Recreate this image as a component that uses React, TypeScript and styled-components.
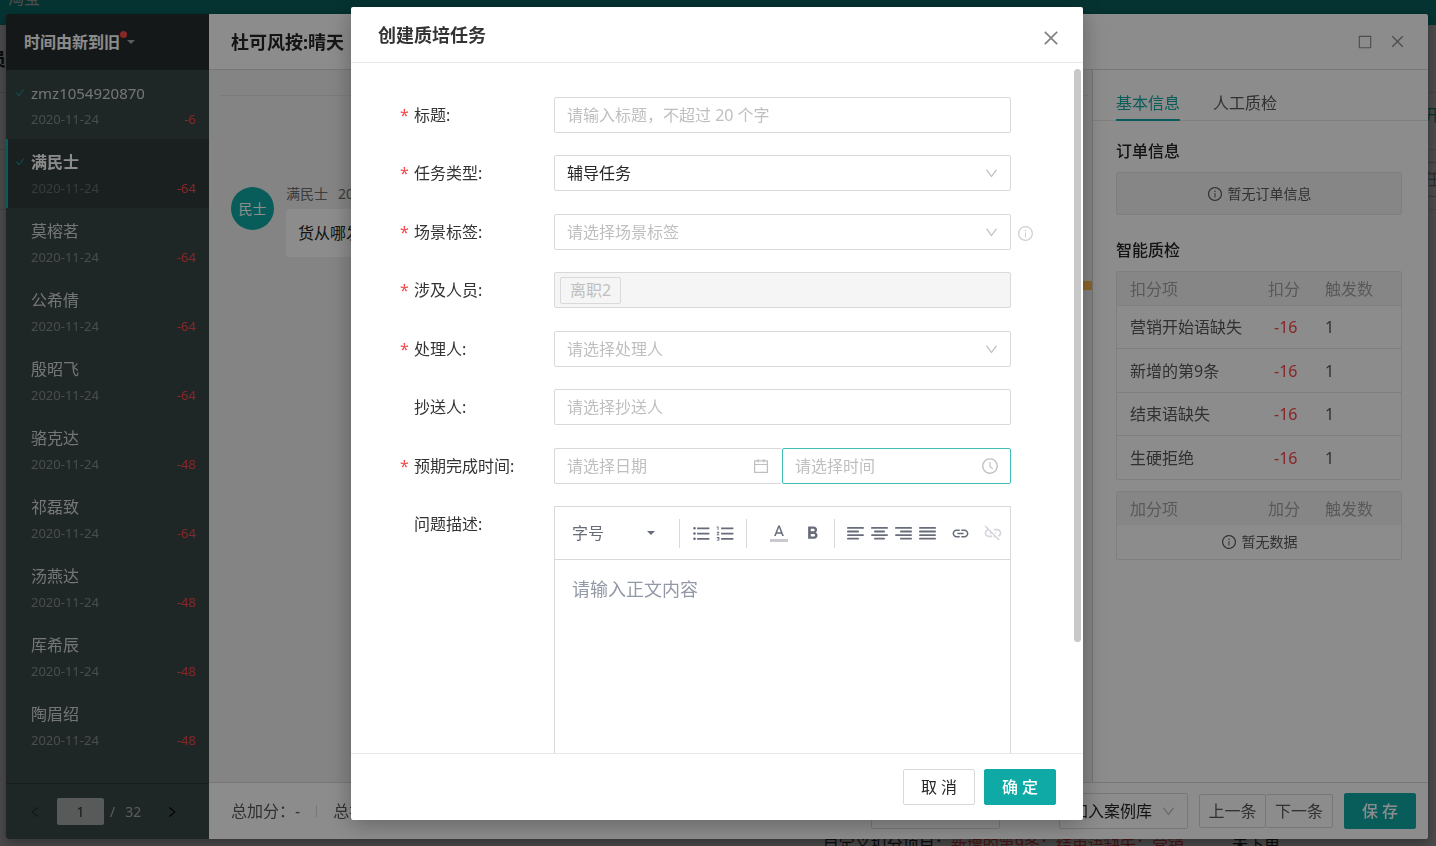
import React from "react";
import styled, { createGlobalStyle, css } from "styled-components";
import {
  AiOutlineBorder,
  AiOutlineCalendar,
  AiOutlineCheck,
  AiOutlineClockCircle,
  AiOutlineClose,
  AiOutlineDown,
  AiOutlineInfoCircle,
  AiOutlineLeft,
  AiOutlineRight,
} from "react-icons/ai";
import {
  MdFormatBold,
  MdFormatListBulleted,
  MdFormatListNumbered,
  MdLink,
  MdLinkOff,
} from "react-icons/md";

const color = {
  primary: "#0fa9a6",
  danger: "#f5474b",
  text: "#262626",
  body: "#595959",
  hint: "#bfbfbf",
  border: "#d9d9d9",
  line: "#e8e8e8",
  tool: "#676c7b",
};

const GlobalStyle = createGlobalStyle`
  *, *::before, *::after { box-sizing: border-box; }
  body {
    margin: 0;
    overflow: hidden;
    color: ${color.text};
    font: 16px/24px "Noto Sans", "Noto Sans CJK SC", sans-serif;
  }
  button, input, select, textarea { font: inherit; color: inherit; }
  h1, h2, h3, p, ul { margin: 0; padding: 0; font-weight: 400; }
  button { cursor: pointer; }
  svg { display: block; }
`;

/* ---------- page under the overlays ---------- */

const Page = styled.div`
  height: 100vh;
  display: flex;
  flex-direction: column;
  overflow: hidden;
  background: #f5f5f5;
`;

const TopBar = styled.header`
  flex: none;
  display: flex;
  align-items: flex-end;
  height: 25px;
  padding: 0 8px 15px;
  overflow: hidden;
  background: ${color.primary};
  color: #fff;
`;

const PageHead = styled.div`
  flex: none;
  display: flex;
  align-items: center;
  height: 68px;
  border-bottom: 1px solid ${color.border};
`;

const PageTitle = styled.h1`
  width: 6px;
  overflow: hidden;
  direction: rtl;
  white-space: nowrap;
  font-size: 18px;
  font-weight: 700;
`;

const PageBar = styled.div`
  flex: none;
  display: flex;
  align-items: flex-start;
  justify-content: flex-end;
  height: 57px;
  padding-top: 10px;
  border-bottom: 1px solid ${color.border};
  color: ${color.primary};
`;

const PageLink = styled.a`
  width: 12px;
  overflow: hidden;
  white-space: nowrap;
  color: inherit;
  text-decoration: none;
`;

const PageFilter = styled.div`
  flex: none;
  display: flex;
  justify-content: flex-end;
  padding: 12px 0;
  border-bottom: 1px solid ${color.border};
`;

const PageFilterBox = styled.div`
  width: 12px;
  height: 35px;
  padding: 4px 0;
  overflow: hidden;
  border: solid #bfbfbf;
  border-width: 1px 0;
  color: #8c8c8c;
`;

const PageRows = styled.div`
  flex: 1;
  display: flex;
  align-items: flex-end;
  justify-content: flex-end;
  gap: 48px;
  padding-right: 156px;
  height: 0;
  margin-bottom: -10px;
  white-space: nowrap;
  em { color: ${color.danger}; font-style: normal; }
`;

const Mask = styled.div<{ $pad: string }>`
  position: fixed;
  inset: 0;
  display: flex;
  justify-content: center;
  padding: ${(p) => p.$pad};
  background: rgba(0, 0, 0, 0.45);
`;

/* ---------- review window ---------- */

const Review = styled.section`
  flex: 1;
  display: flex;
  min-width: 0;
  overflow: hidden;
  border-radius: 2px;
  background: #fff;
  box-shadow: 0 4px 12px rgba(0, 0, 0, 0.3);
`;

const Side = styled.aside`
  flex: none;
  display: flex;
  flex-direction: column;
  width: 203px;
  background: #3a4646;
  color: #fff;
`;

const SortButton = styled.button`
  flex: none;
  display: flex;
  align-items: center;
  height: 56px;
  padding: 0 18px;
  border: 0;
  background: #262d2f;
  color: #fff;
  font-weight: 700;
`;

const Dot = styled.i`
  align-self: flex-start;
  width: 7px;
  height: 7px;
  margin-top: 17px;
  border-radius: 50%;
  background: ${color.danger};
`;

const Caret = styled.i<{ $tone: string }>`
  border: solid transparent;
  border-width: 4px 4px 0;
  border-top-color: ${(p) => p.$tone};
`;

const Buyers = styled.ul`
  flex: 1;
  min-height: 0;
  overflow: hidden;
  list-style: none;
`;

const Buyer = styled.li<{ $active?: boolean }>`
  display: grid;
  grid-template-columns: 16px 1fr auto;
  align-content: center;
  align-items: center;
  row-gap: 2px;
  height: 69px;
  padding: 2px 13px 0 9px;
  ${(p) =>
    p.$active &&
    css`
      padding-left: 7px;
      border-left: 2px solid ${color.primary};
      background: #313a3b;
    `}
`;

const Tick = styled.span`
  color: ${color.primary};
`;

const BuyerName = styled.span<{ $active?: boolean; $latin?: boolean }>`
  grid-column: 2 / 4;
  font-size: ${(p) => (p.$latin ? 15 : 16)}px;
  font-weight: ${(p) => (p.$active ? 700 : 400)};
  color: ${(p) => (p.$active ? "#fff" : "#d4d6d6")};
`;

const BuyerDate = styled.time<{ $active?: boolean }>`
  grid-column: 2;
  font-size: 13px;
  color: ${(p) => (p.$active ? "#656b6b" : "#858b8b")};
`;

const Loss = styled.span`
  font-size: 13px;
  color: ${color.danger};
`;

const Pager = styled.nav`
  flex: none;
  display: flex;
  align-items: center;
  height: 56px;
  padding: 0 30px 0 22px;
  border-top: 1px solid #2d3637;
  font-size: 14px;
  color: #a5a9a9;
`;

const PageInput = styled.input`
  width: 47px;
  height: 27px;
  margin: 0 6px 0 15px;
  border: 0;
  border-radius: 2px;
  background: #a1a5a5;
  color: ${color.text};
  text-align: center;
`;

const PageTotal = styled.span`
  flex: 1;
  padding-left: 10px;
`;

const IconButton = styled.button<{ $tone: string }>`
  display: flex;
  padding: 0;
  border: 0;
  background: none;
  color: ${(p) => p.$tone};
`;

const Work = styled.div`
  flex: 1;
  display: flex;
  flex-direction: column;
  min-width: 0;
`;

const WorkHead = styled.header`
  flex: none;
  display: flex;
  align-items: center;
  gap: 16px;
  height: 56px;
  padding: 0 22px;
  border-bottom: 1px solid ${color.border};
`;

const WorkTitle = styled.h2`
  flex: 1;
  font-size: 18px;
  font-weight: 700;
`;

const WorkBody = styled.div`
  flex: 1;
  display: flex;
  min-height: 0;
`;

const Chat = styled.div`
  flex: 1;
  position: relative;
  padding: 25px 4px 0 11px;
  background: #f0f0f0;
`;

const ChatLine = styled.hr`
  margin: 0 0 90px;
  border: 0;
  border-top: 1px solid #e2e2e2;
`;

const Message = styled.div`
  display: flex;
  gap: 12px;
  padding-left: 11px;
`;

const Avatar = styled.span`
  width: 43px;
  height: 43px;
  margin-top: 1px;
  border-radius: 50%;
  background: ${color.primary};
  color: #fff;
  font-size: 14px;
  line-height: 43px;
  text-align: center;
`;

const Meta = styled.div`
  display: flex;
  gap: 10px;
  font-size: 14px;
  line-height: 16px;
  color: #6e6e6e;
`;

const Bubble = styled.p`
  margin-top: 7px;
  padding: 12px;
  border-radius: 4px;
  background: #fff;
`;

const Marker = styled.i`
  position: absolute;
  top: 211px;
  right: 0;
  width: 10px;
  height: 9px;
  background: #ffb74d;
`;

const Info = styled.aside`
  flex: none;
  width: 336px;
  border-left: 1px solid #d2d2d2;
`;

const Tabs = styled.div`
  display: flex;
  align-items: flex-end;
  gap: 33px;
  height: 51px;
  padding-left: 23px;
  border-bottom: 1px solid ${color.line};
`;

const Tab = styled.button<{ $on?: boolean }>`
  height: 36px;
  margin-bottom: -1px;
  padding: 2px 0 0;
  border: 0;
  border-bottom: 2px solid ${(p) => (p.$on ? color.primary : "transparent")};
  background: none;
  color: ${(p) => (p.$on ? color.primary : color.body)};
`;

const InfoBody = styled.div`
  padding: 18px 26px 0 23px;
`;

const InfoTitle = styled.h3`
  margin-bottom: 9px;
  font-size: 16px;
  font-weight: 500;
`;

const Empty = styled.div<{ $boxed?: boolean }>`
  display: flex;
  align-items: center;
  justify-content: center;
  gap: 5px;
  font-size: 14px;
  line-height: 22px;
  color: ${color.body};
  ${(p) =>
    p.$boxed &&
    css`
      height: 43px;
      margin-bottom: 23px;
      border: 1px solid ${color.line};
      border-radius: 2px;
      background: #f5f5f5;
    `}
`;

const Scores = styled.table`
  width: 100%;
  margin-bottom: 11px;
  border: 1px solid ${color.line};
  border-radius: 2px;
  border-spacing: 0;
  table-layout: fixed;
  color: ${color.body};
  th, td { padding: 0; font-weight: 400; text-align: left; }
  th { height: 33px; background: #f5f5f5; color: #a0a3a6; }
  th:first-child { padding-left: 13px; }
  th:nth-child(2) { width: 57px; }
  th:nth-child(3) { width: 76px; }
`;

const ScoreRow = styled.tr`
  height: 43px;
  &:nth-child(even) { height: 44px; }
  td { border-top: 1px solid ${color.line}; }
  td:first-child { padding-left: 13px; }
  td:nth-child(2) { padding-left: 6px; color: ${color.danger}; }
`;

const WorkFoot = styled.footer`
  flex: none;
  display: flex;
  align-items: center;
  gap: 11px;
  height: 57px;
  padding: 0 12px 0 22px;
  border-top: 1px solid ${color.border};
  color: ${color.body};
`;

const Totals = styled.div`
  flex: 1;
  display: flex;
  align-items: center;
  gap: 16px;
`;

const Rule = styled.i<{ $h: number }>`
  flex: none;
  width: 1px;
  height: ${(p) => p.$h}px;
  background: ${color.border};
`;

const FootSelect = styled.div<{ $gap?: boolean }>`
  width: 129px;
  margin-right: ${(p) => (p.$gap ? 48 : 0)}px;
`;

const Group = styled.div`
  display: flex;
  button + button { border-left: 0; }
`;

const Button = styled.button<{ $kind?: "primary" | "group" }>`
  width: 72px;
  height: 36px;
  padding: 0;
  border: 1px solid ${color.border};
  border-radius: 2px;
  background: #fff;
  color: ${color.text};
  ${(p) =>
    p.$kind === "primary" &&
    css`
      border-color: ${color.primary};
      background: ${color.primary};
      color: #fff;
      font-weight: 500;
    `}
  ${(p) =>
    p.$kind === "group" &&
    css`
      width: 67px;
      height: 34px;
      color: ${color.body};
    `}
`;

/* ---------- task dialog ---------- */

const Dialog = styled.section`
  display: flex;
  flex-direction: column;
  width: 732px;
  max-width: 100%;
  border-radius: 2px;
  background: #fff;
  box-shadow: 0 4px 24px rgba(0, 0, 0, 0.3);
`;

const DialogHead = styled.header`
  flex: none;
  display: flex;
  align-items: center;
  justify-content: space-between;
  height: 56px;
  padding: 0 22px 0 27px;
  border-bottom: 1px solid ${color.line};
  ${IconButton} { padding-top: 6px; }
`;

const DialogTitle = styled.h2`
  font-size: 18px;
  font-weight: 700;
  color: #333;
`;

const DialogBody = styled.div`
  flex: 1;
  position: relative;
  min-height: 0;
  overflow: hidden;
  padding: 34px 72px 0 49px;
`;

const Thumb = styled.i`
  position: absolute;
  top: 6px;
  right: 2px;
  bottom: 111px;
  width: 7px;
  border-radius: 4px;
  background: #c8c8c8;
`;

const Row = styled.div`
  display: grid;
  grid-template-columns: 154px 1fr;
  position: relative;
  margin-bottom: 22px;
  &:nth-child(even) { margin-bottom: 23px; }
`;

const Label = styled.label<{ $required?: boolean }>`
  display: flex;
  height: 36px;
  line-height: 36px;
  color: #333;
  &::before {
    content: "${(p) => (p.$required ? "*" : "")}";
    width: 14px;
    color: ${color.danger};
  }
`;

const Control = styled.div`
  position: relative;
  min-width: 0;
`;

const boxed = css`
  display: block;
  width: 100%;
  height: 36px;
  padding: 0 12px;
  border: 1px solid ${color.border};
  border-radius: 2px;
  outline: 0;
  background: #fff;
`;

const Input = styled.input<{ $focus?: boolean }>`
  ${boxed}
  border-color: ${(p) => (p.$focus ? "#3fbdb8" : color.border)};
  &::placeholder { color: ${color.hint}; opacity: 1; }
`;

const Select = styled.select<{ $tone: string }>`
  ${boxed}
  appearance: none;
  color: ${(p) => p.$tone};
`;

const Suffix = styled.span`
  position: absolute;
  top: 0;
  right: 12px;
  bottom: 0;
  display: flex;
  align-items: center;
  color: ${color.hint};
  pointer-events: none;
`;

const Aside = styled.span`
  position: absolute;
  left: 100%;
  top: 11px;
  padding-left: 6px;
  color: #d0d0d0;
`;

const TagBox = styled.div`
  ${boxed}
  display: flex;
  align-items: center;
  padding: 0 5px;
  background: #f5f5f5;
`;

const Tag = styled.span`
  height: 27px;
  padding: 0 9px;
  border: 1px solid ${color.border};
  border-radius: 2px;
  color: ${color.hint};
  line-height: 25px;
`;

const Pair = styled.div`
  display: grid;
  grid-template-columns: 228px 1fr;
  ${Control}:first-child input { border-right: 0; }
`;

const Editor = styled.div`
  height: 360px;
  border: 1px solid ${color.border};
  color: ${color.tool};
`;

const Toolbar = styled.div`
  display: flex;
  align-items: center;
  height: 53px;
  padding-left: 17px;
  border-bottom: 1px solid ${color.border};
`;

const SizePick = styled.div`
  display: flex;
  align-items: center;
  width: 83px;
  margin-right: 24px;
  select {
    flex: 1;
    min-width: 0;
    padding: 0;
    border: 0;
    appearance: none;
    background: none;
  }
`;

const Tools = styled.div<{ $l: number; $r: number; $gap?: number }>`
  display: flex;
  gap: ${(p) => p.$gap || 0}px;
  margin: 0 ${(p) => p.$r}px 0 ${(p) => p.$l}px;
`;

const Tool = styled.button`
  display: flex;
  align-items: center;
  justify-content: center;
  width: 24px;
  height: 24px;
  padding: 0;
  border: 0;
  background: none;
  &:disabled { color: #d3d5da; }
`;

const EditorText = styled.textarea`
  display: block;
  width: 100%;
  height: 290px;
  padding: 15px 17px;
  border: 0;
  outline: 0;
  resize: none;
  font-size: 18px;
  line-height: 28px;
  &::placeholder { color: #9298a5; opacity: 1; }
`;

const DialogFoot = styled.footer`
  flex: none;
  display: flex;
  align-items: center;
  justify-content: flex-end;
  gap: 9px;
  height: 67px;
  padding-right: 27px;
  border-top: 1px solid ${color.line};
`;

/* ---------- drawings ---------- */

const alignBars: Record<string, [number, number][]> = {
  左对齐: [[0, 17], [0, 12], [0, 17], [0, 12]],
  居中: [[0, 17], [3, 11], [0, 17], [3, 11]],
  右对齐: [[0, 17], [5, 12], [0, 17], [5, 12]],
  两端对齐: [[0, 17], [0, 17], [0, 17], [0, 17]],
};

const AlignIcon = ({ bars }: { bars: [number, number][] }) => (
  <svg width="17" height="13" viewBox="0 0 17 13" fill="currentColor">
    {bars.map(([x, w], i) => (
      <rect key={i} x={x} y={i * 3.6} width={w} height="1.8" rx=".9" />
    ))}
  </svg>
);

const TextColorIcon = () => (
  <svg width="18" height="18" viewBox="0 0 24 24" fill="currentColor">
    <path d="M11 2 5.5 16h2.25l1.12-3h6.25l1.12 3h2.25L13 2h-2zm-1.38 9L12 4.67 14.38 11H9.62z" />
    <path d="M0 20h24v4H0z" fill="#c9cacd" />
  </svg>
);

/* ---------- data ---------- */

const buyers: [string, number][] = [
  ["zmz1054920870", -6],
  ["满民士", -64],
  ["莫榕茗", -64],
  ["公希倩", -64],
  ["殷昭飞", -64],
  ["骆克达", -48],
  ["祁磊致", -64],
  ["汤燕达", -48],
  ["厍希辰", -48],
  ["陶眉绍", -48],
];

const faults = ["营销开始语缺失", "新增的第9条", "结束语缺失", "生硬拒绝"];

const Pick = ({ id, label, tone = color.hint }: { id: string; label: string; tone?: string }) => (
  <>
    <Select id={id} $tone={tone} aria-label={label}>
      <option>{label}</option>
    </Select>
    <Suffix>
      <AiOutlineDown size={15} />
    </Suffix>
  </>
);

const Field = ({
  id,
  label,
  required,
  children,
}: {
  id: string;
  label: string;
  required?: boolean;
  children: React.ReactNode;
}) => (
  <Row>
    <Label htmlFor={id} $required={required}>
      {label}:
    </Label>
    <Control>{children}</Control>
  </Row>
);

const ScoreHead = ({ kind }: { kind: string }) => (
  <thead>
    <tr>
      <th>{kind}项</th>
      <th>{kind}</th>
      <th>触发数</th>
    </tr>
  </thead>
);

export default function App() {
  return (
    <>
      <GlobalStyle />
      <Page>
        <TopBar>淘宝</TopBar>
        <PageHead>
          <PageTitle>会员</PageTitle>
        </PageHead>
        <PageBar>
          <PageLink href="#">开</PageLink>
        </PageBar>
        <PageFilter>
          <PageFilterBox>任务</PageFilterBox>
        </PageFilter>
        <PageRows>
          <span>
            自定义扣分项目：<em>新增的第9条；结束语缺失；营销</em>
          </span>
          <span>未下单</span>
        </PageRows>
      </Page>

      <Mask $pad="14px 8px 7px 6px">
        <Review>
          <Side>
            <SortButton>
              时间由新到旧
              <Dot />
              <Caret $tone="#a5a9a9" />
            </SortButton>
            <Buyers>
              {buyers.map(([name, score], i) => (
                <Buyer key={name} $active={i === 1}>
                  {i < 2 && (
                    <Tick>
                      <AiOutlineCheck size={10} />
                    </Tick>
                  )}
                  <BuyerName $active={i === 1} $latin={i === 0}>
                    {name}
                  </BuyerName>
                  <BuyerDate $active={i === 1}>2020-11-24</BuyerDate>
                  <Loss>{score}</Loss>
                </Buyer>
              ))}
            </Buyers>
            <Pager>
              <IconButton $tone="#1f2626" aria-label="上一页">
                <AiOutlineLeft size={14} />
              </IconButton>
              <PageInput defaultValue="1" aria-label="页码" />/
              <PageTotal>32</PageTotal>
              <IconButton $tone="#000" aria-label="下一页">
                <AiOutlineRight size={14} />
              </IconButton>
            </Pager>
          </Side>

          <Work>
            <WorkHead>
              <WorkTitle>杜可风按:晴天</WorkTitle>
              <IconButton $tone="#8c8c8c" aria-label="最大化">
                <AiOutlineBorder size={16} />
              </IconButton>
              <IconButton $tone="#8c8c8c" aria-label="关闭">
                <AiOutlineClose size={17} />
              </IconButton>
            </WorkHead>
            <WorkBody>
              <Chat>
                <ChatLine />
                <Message>
                  <Avatar>民士</Avatar>
                  <div>
                    <Meta>
                      <span>满民士</span>
                      <time>2020-11-24</time>
                    </Meta>
                    <Bubble>货从哪发</Bubble>
                  </div>
                </Message>
                <Marker />
              </Chat>
              <Info>
                <Tabs>
                  <Tab $on>基本信息</Tab>
                  <Tab>人工质检</Tab>
                </Tabs>
                <InfoBody>
                  <InfoTitle>订单信息</InfoTitle>
                  <Empty $boxed>
                    <AiOutlineInfoCircle size={16} />
                    暂无订单信息
                  </Empty>
                  <InfoTitle>智能质检</InfoTitle>
                  <Scores>
                    <ScoreHead kind="扣分" />
                    <tbody>
                      {faults.map((f) => (
                        <ScoreRow key={f}>
                          <td>{f}</td>
                          <td>-16</td>
                          <td>1</td>
                        </ScoreRow>
                      ))}
                    </tbody>
                  </Scores>
                  <Scores>
                    <ScoreHead kind="加分" />
                    <tbody>
                      <tr>
                        <td colSpan={3} height="34">
                          <Empty>
                            <AiOutlineInfoCircle size={16} />
                            暂无数据
                          </Empty>
                        </td>
                      </tr>
                    </tbody>
                  </Scores>
                </InfoBody>
              </Info>
            </WorkBody>
            <WorkFoot>
              <Totals>
                <span>总加分：-</span>
                <Rule $h={12} />
                <span>总扣分：-64</span>
              </Totals>
              <FootSelect $gap>
                <Control>
                  <Pick id="move" label="标记状态" tone={color.text} />
                </Control>
              </FootSelect>
              <FootSelect>
                <Control>
                  <Pick id="library" label="加入案例库" tone={color.text} />
                </Control>
              </FootSelect>
              <Group>
                <Button $kind="group">上一条</Button>
                <Button $kind="group">下一条</Button>
              </Group>
              <Button $kind="primary">保 存</Button>
            </WorkFoot>
          </Work>
        </Review>
      </Mask>

      <Mask $pad="7px 8px 26px 6px">
        <Dialog role="dialog" aria-label="创建质培任务">
          <DialogHead>
            <DialogTitle>创建质培任务</DialogTitle>
            <IconButton $tone="#7f7f7f" aria-label="关闭">
              <AiOutlineClose size={20} />
            </IconButton>
          </DialogHead>
          <DialogBody>
            <Field id="title" label="标题" required>
              <Input id="title" placeholder="请输入标题，不超过 20 个字" />
            </Field>
            <Field id="type" label="任务类型" required>
              <Pick id="type" label="辅导任务" tone={color.text} />
            </Field>
            <Field id="scene" label="场景标签" required>
              <Pick id="scene" label="请选择场景标签" />
              <Aside>
                <AiOutlineInfoCircle size={17} />
              </Aside>
            </Field>
            <Field id="people" label="涉及人员" required>
              <TagBox id="people">
                <Tag>离职2</Tag>
              </TagBox>
            </Field>
            <Field id="owner" label="处理人" required>
              <Pick id="owner" label="请选择处理人" />
            </Field>
            <Field id="cc" label="抄送人">
              <Input id="cc" placeholder="请选择抄送人" />
            </Field>
            <Field id="date" label="预期完成时间" required>
              <Pair>
                <Control>
                  <Input id="date" placeholder="请选择日期" />
                  <Suffix>
                    <AiOutlineCalendar size={18} />
                  </Suffix>
                </Control>
                <Control>
                  <Input placeholder="请选择时间" aria-label="时间" $focus />
                  <Suffix>
                    <AiOutlineClockCircle size={18} />
                  </Suffix>
                </Control>
              </Pair>
            </Field>
            <Field id="detail" label="问题描述">
              <Editor>
                <Toolbar>
                  <SizePick>
                    <select aria-label="字号">
                      <option>字号</option>
                    </select>
                    <Caret $tone={color.tool} />
                  </SizePick>
                  <Rule $h={29} />
                  <Tools $l={9} $r={9}>
                    <Tool aria-label="无序列表">
                      <MdFormatListBulleted size={21} />
                    </Tool>
                    <Tool aria-label="有序列表">
                      <MdFormatListNumbered size={21} />
                    </Tool>
                  </Tools>
                  <Rule $h={29} />
                  <Tools $l={20} $r={10} $gap={9}>
                    <Tool aria-label="文字颜色">
                      <TextColorIcon />
                    </Tool>
                    <Tool aria-label="加粗">
                      <MdFormatBold size={21} />
                    </Tool>
                  </Tools>
                  <Rule $h={29} />
                  <Tools $l={8} $r={9}>
                    {Object.entries(alignBars).map(([name, bars]) => (
                      <Tool key={name} aria-label={name}>
                        <AlignIcon bars={bars} />
                      </Tool>
                    ))}
                  </Tools>
                  <Tools $l={0} $r={0} $gap={9}>
                    <Tool aria-label="插入链接">
                      <MdLink size={19} />
                    </Tool>
                    <Tool aria-label="取消链接" disabled>
                      <MdLinkOff size={20} />
                    </Tool>
                  </Tools>
                </Toolbar>
                <EditorText id="detail" placeholder="请输入正文内容" />
              </Editor>
            </Field>
            <Thumb />
          </DialogBody>
          <DialogFoot>
            <Button>取 消</Button>
            <Button $kind="primary">确 定</Button>
          </DialogFoot>
        </Dialog>
      </Mask>
    </>
  );
}
